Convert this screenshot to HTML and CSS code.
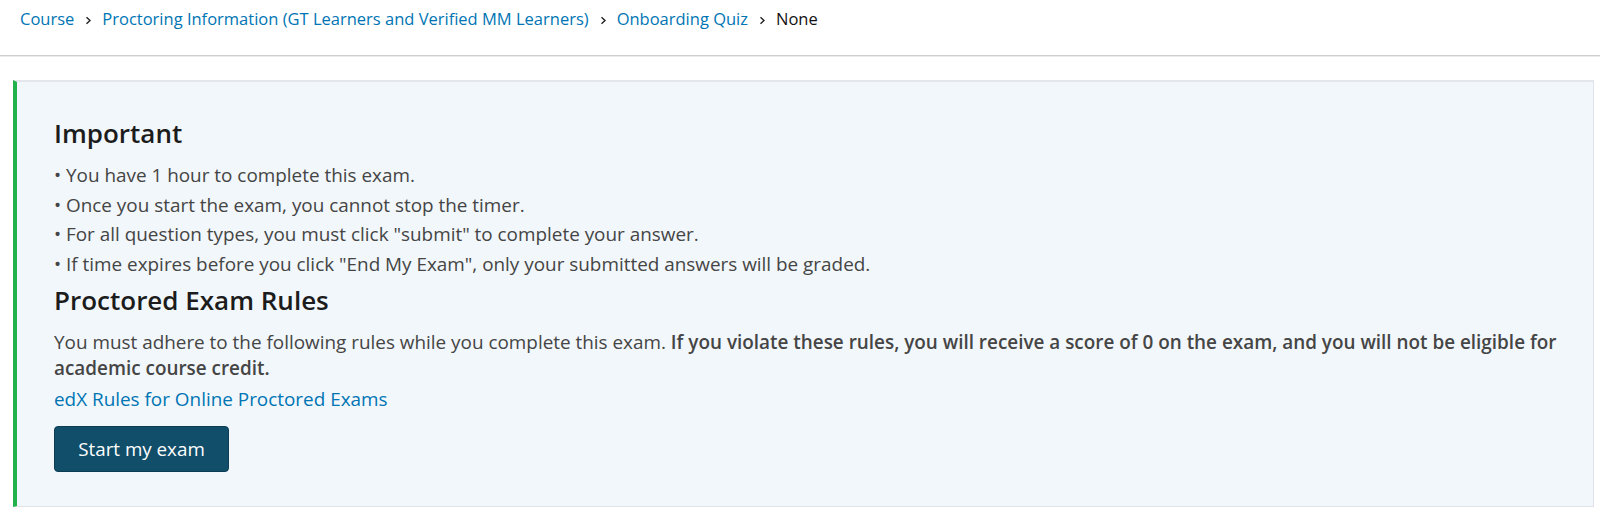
FILE: index.html
```html
<!DOCTYPE html>
<html lang="en">
<head>
<meta charset="utf-8">
<title>Onboarding Quiz</title>
<link rel="stylesheet" href="styles.css">
</head>
<body>
<header class="topbar">
  <nav class="crumbs">
    <a href="#">Course</a>
    <span class="sep"><svg width="7" height="9" viewBox="0 0 7 9"><path d="M1.5 1.2 L5 4.5 L1.5 7.8" fill="none" stroke="#222" stroke-width="1.4"/></svg></span>
    <a href="#">Proctoring Information (GT Learners and Verified MM Learners)</a>
    <span class="sep"><svg width="7" height="9" viewBox="0 0 7 9"><path d="M1.5 1.2 L5 4.5 L1.5 7.8" fill="none" stroke="#222" stroke-width="1.4"/></svg></span>
    <a href="#">Onboarding Quiz</a>
    <span class="sep"><svg width="7" height="9" viewBox="0 0 7 9"><path d="M1.5 1.2 L5 4.5 L1.5 7.8" fill="none" stroke="#222" stroke-width="1.4"/></svg></span>
    <span class="current">None</span>
  </nav>
</header>
<main class="panel">
  <h3 class="title">Important</h3>
  <ul class="notes">
    <li>• You have 1 hour to complete this exam.</li>
    <li>• Once you start the exam, you cannot stop the timer.</li>
    <li>• For all question types, you must click "submit" to complete your answer.</li>
    <li>• If time expires before you click "End My Exam", only your submitted answers will be graded.</li>
  </ul>
  <h3 class="title rules">Proctored Exam Rules</h3>
  <p class="intro">You must adhere to the following rules while you complete this exam. <strong>If you violate these rules, you will receive a score of 0 on the exam, and you will not be eligible for academic course credit.</strong></p>
  <a class="rules-link" href="#">edX Rules for Online Proctored Exams</a>
  <div class="actions"><button class="start" type="button">Start my exam</button></div>
</main>
</body>
</html>
```
FILE: styles.css
```css
* { box-sizing: border-box; }
html, body { margin: 0; padding: 0; background: #fff; }
body {
  font-family: "Open Sans", "Noto Sans", sans-serif;
  color: #454545;
  font-size: 18.9px;
}
a { color: #0075b4; text-decoration: none; }

.topbar {
  height: 56px;
  padding: 6px 20px 0;
  border-bottom: 1px solid #cfcfcf;
  box-shadow: 0 1px 0 #ececec;
}
.crumbs {
  display: flex;
  align-items: center;
  line-height: 26px;
  font-size: 16.5px;
}
.crumbs .sep {
  display: inline-flex;
  align-items: center;
  margin: 2px 10px 0 11px;
}
.crumbs .current { color: #111; }

.panel {
  margin: 24px 6px 0 13px;
  background: #f2f7fb;
  border: 1px solid #dfe3e7;
  border-top: 2px solid #e3e7eb;
  border-left: 4px solid #22b24c;
  padding: 35px 8px 34px 37px;
}
.title {
  margin: 0;
  font-size: 26px;
  line-height: 32px;
  font-weight: 600;
  color: #1c1c1c;
}
.notes {
  list-style: none;
  margin: 12px 0 0;
  padding: 0;
  line-height: 29.6px;
}
.rules { margin-top: 5px; }
.intro {
  margin: 14px 0 0;
  line-height: 25.6px;
}
.intro strong { font-weight: 600; color: #454545; }
.rules-link {
  display: block;
  margin-top: 5px;
  line-height: 25.6px;
}
.actions { margin-top: 14px; }
.start {
  width: 175px;
  height: 46px;
  background: #114e69;
  color: #fff;
  border: 1px solid #0c3d53;
  border-radius: 4px;
  font-family: "Open Sans", "Noto Sans", sans-serif;
  font-size: 18.8px;
  padding: 0;
}
```
